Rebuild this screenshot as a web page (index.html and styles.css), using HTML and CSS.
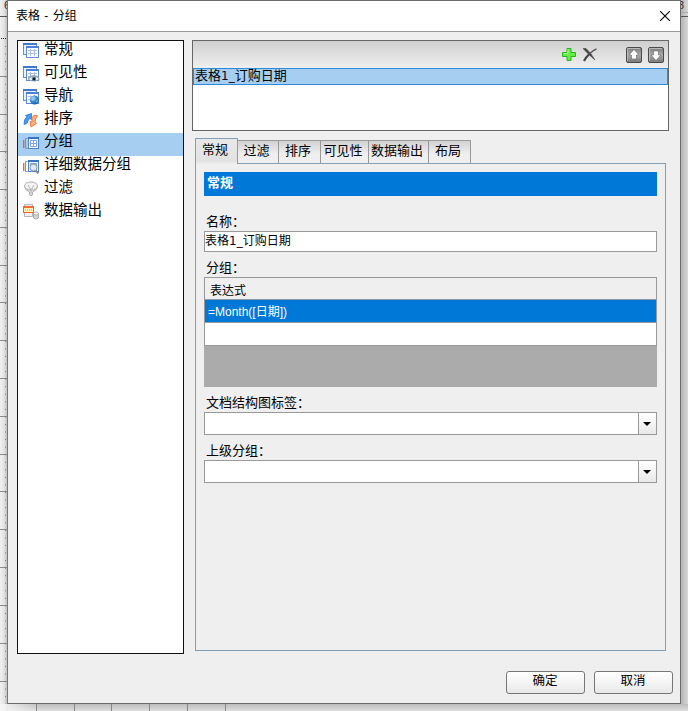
FILE: index.html
```
<!DOCTYPE html>
<html lang="zh-CN">
<head>
<meta charset="utf-8">
<title>表格 - 分组</title>
<link rel="stylesheet" href="styles.css">
</head>
<body>
<svg class="canvas" width="688" height="711" viewBox="0 0 688 711" aria-hidden="true">
  <defs>
    <linearGradient id="sl" x1="0" x2="1" y1="0" y2="0"><stop offset="0" stop-color="#f0f0f0"/><stop offset=".5" stop-color="#e4e4e4"/><stop offset="1" stop-color="#b4b4b4"/></linearGradient>
    <linearGradient id="sr" x1="0" x2="1" y1="0" y2="0"><stop offset="0" stop-color="#b4b4b4"/><stop offset="1" stop-color="#d8d8d8"/></linearGradient>
    <linearGradient id="sb" x1="0" x2="0" y1="0" y2="1"><stop offset="0" stop-color="#bcbcbc"/><stop offset="1" stop-color="#dedede"/></linearGradient>
    <linearGradient id="corner" x1="0" x2="1" y1="0" y2="0"><stop offset="0" stop-color="#f6f6f6"/><stop offset="1" stop-color="#f6f6f6" stop-opacity="0"/></linearGradient>
  </defs>
  <rect width="8" height="711" fill="url(#sl)"/>
  <rect x="681" width="7" height="711" fill="url(#sr)"/>
  <rect y="704" x="8" width="680" height="7" fill="url(#sb)"/>
  <rect y="704" x="0" width="40" height="7" fill="url(#corner)"/>
  <path d="M0 16.500H8M681 16.500H688" stroke="#555"/>
  <path d="M681 12.500H688" stroke="#aaa"/>
  <path d="M1 38.500H8" stroke="#222" stroke-dasharray="1 1"/>
  <path d="M0 76.500H8M0 114.500H8M0 151.500H8M0 189.500H8M0 227.500H8M0 265.500H8M0 302.500H8M0 340.500H8M0 378.500H8M0 416.500H8M0 454.500H8M0 491.500H8M0 529.500H8M0 567.500H8M0 605.500H8M0 643.500H8M0 681.500H8" stroke="#8a8a8a"/>
  <path d="M5.500 46V704" stroke="#777" stroke-dasharray="1 6.560"/>
  <path d="M36.500 704V711M74.500 704V711M111.500 704V711M149.500 704V711M187.500 704V711M225.500 704V711" stroke="#858585"/>
  <text x="4" y="9" class="ruler">6</text>
  <text x="678" y="9" class="ruler">3</text>
</svg>

<svg class="defs" aria-hidden="true">
  <defs>
    <linearGradient id="metal" x1="0" x2="0" y1="0" y2="1"><stop offset="0" stop-color="#7c7c7c"/><stop offset=".5" stop-color="#aaa"/><stop offset="1" stop-color="#777"/></linearGradient>
    <radialGradient id="globe" cx=".35" cy=".3" r=".8"><stop offset="0" stop-color="#a9dcff"/><stop offset=".5" stop-color="#3887ce"/><stop offset="1" stop-color="#155093"/></radialGradient>
    <symbol id="tables" viewBox="0 0 17 16">
      <rect x=".5" y=".5" width="13" height="11" fill="#e9f1ff" stroke="#608fdc"/>
      <path d="M0 1H14" stroke="#4277d0" stroke-width="2"/>
      <rect x="3.500" y="3.500" width="12" height="11" fill="#fff" stroke="#5c8ce0"/>
      <path d="M3 4H16" stroke="#4b7fdb" stroke-width="2"/>
      <path d="M5 7.500H14M5 10.500H14M7.500 6V13M11.500 6V13" stroke="#a9bde4" fill="none"/>
    </symbol>
    <symbol id="group" viewBox="0 0 17 16">
      <path d="M.7 5V13" stroke="#d86c1d" stroke-width="1.300"/>
      <path d="M4.500 3.500H2.500V13.500H4.500" fill="none" stroke="#6c94cb"/>
      <rect x="5.500" y="2.500" width="10" height="11" fill="#f5f9ff" stroke="#4e82d5"/>
      <path d="M5 3H16" stroke="#3b71c9" stroke-width="2"/>
      <path d="M7.500 5.500H13.500V11.500H7.500ZM7.500 8.500H13.500M10.500 5.500V11.500" fill="#fff" stroke="#82a5de"/>
    </symbol>
  </defs>
</svg>

<main class="dialog">
  <header class="titlebar">
    <h1 class="title">表格 - 分组</h1>
    <svg class="close" width="10" height="10" viewBox="0 0 10 10"><path d="M0 0L10 10M10 0L0 10" stroke="#000" stroke-width="1.100"/></svg>
  </header>

  <div class="content">
    <nav class="sidebar">
      <a class="item"><svg class="icon"><use href="#tables"/></svg>常规</a>
      <a class="item"><svg class="icon" viewBox="0 0 17 16"><use href="#tables" width="17" height="16"/><path d="M5 13Q11 8 16.500 13Q11 17 5 13Z" fill="#fff" stroke="#999" stroke-width=".8"/><path d="M5 12Q10.500 7.500 16 11.500" fill="none" stroke="#8f9699"/><circle cx="11" cy="13" r="2.300" fill="#4b87a8"/><circle cx="11" cy="13" r="1.200" fill="#111"/></svg>可见性</a>
      <a class="item"><svg class="icon" viewBox="0 0 17 16"><use href="#tables" width="17" height="16"/><circle cx="11.500" cy="11" r="4.500" fill="url(#globe)"/><path d="M8 9L11 8L12 10L9 12ZM13 12L15 11L14 14Z" fill="#91c8ec"/></svg>导航</a>
      <a class="item"><svg class="icon" viewBox="0 0 17 16"><path d="M1 12.500Q.8 7 4 4.500L2.500 3.500 8.500 1.500 8.500 7.500 7 6.500Q4.500 8 4.500 11Z" fill="#4c9cf3" stroke="#2375d7" stroke-width=".8"/><path d="M14.500 3.500Q10 2.500 9 5.500L9 10 7 9.500 8 15 13.500 11.500 12 10.500Q12 6.500 14.500 3.500Z" fill="#ffb27d" stroke="#ed7436" stroke-width=".9"/></svg>排序</a>
      <a class="item selected"><svg class="icon"><use href="#group"/></svg>分组</a>
      <a class="item"><svg class="icon" viewBox="0 0 17 16"><use href="#group" width="17" height="16"/><path d="M12 12L15.500 15.500" stroke="#888" stroke-width="2"/><circle cx="10.500" cy="9.500" r="3.500" fill="#dceaf5" stroke="#8b949b"/></svg>详细数据分组</a>
      <a class="item"><svg class="icon" viewBox="0 0 17 16"><path d="M1.500 5Q1.500 9 6.500 11V14Q8 15.500 9.500 14V11Q14.500 9 14.500 5Z" fill="#e4e4e4" stroke="#b0b0b0"/><ellipse cx="8" cy="5" rx="6.500" ry="4" fill="#f4f4f4" stroke="#b0b0b0"/><path d="M8 9L5 4M8 9L11 4M8 9V13" stroke="#aaa" stroke-width=".8"/></svg>过滤</a>
      <a class="item"><svg class="icon" viewBox="0 0 17 16"><path d="M1.500 .5H9.500V12.500H1.500Z" fill="#eee" stroke="#b5b5b5"/><rect x=".5" y="2.500" width="10" height="6" fill="#fff0ba" stroke="#e8682b"/><path d="M0 3H11" stroke="#ed6c32" stroke-width="2"/><path d="M2 6H9" stroke="#ed8e4b" stroke-dasharray="1 1"/><path d="M10.500 9V14Q13 16 15.500 14V9" fill="#d7d7d7" stroke="#aaa"/><ellipse cx="13" cy="9.500" rx="2.500" ry="1.500" fill="#fafafa" stroke="#aaa"/></svg>数据输出</a>
    </nav>

    <div class="main">
      <section class="groups">
        <div class="toolbar">
          <svg class="tool" width="14" height="14" viewBox="0 0 14 14"><path d="M5 .5H9V4.500H13.500V8.500H9V12.500H5V8.500H.5V4.500H5Z" fill="#65ee42" stroke="#25b71b"/><path d="M6 1.500V5.500H1.500" fill="none" stroke="#b8ff99"/></svg>
          <svg class="tool cross" width="14" height="14" viewBox="0 0 14 14"><path d="M0 .5L3 .5Q8 5 12 12Q6 7 0 .5Z" fill="#444" stroke="#444" stroke-width=".6"/><path d="M13.500 .8Q7 4 2.500 10.500" fill="none" stroke="#555" stroke-width="1.300"/><path d="M6 6.500Q3 9 1 13" fill="none" stroke="#444" stroke-width="2.200"/></svg>
          <svg class="tool" width="16" height="16" viewBox="0 0 16 16"><rect x=".5" y=".5" width="15" height="15" rx="1.500" fill="url(#metal)" stroke="#4b4b4b"/><path d="M1.500 14V1.500H14" fill="none" stroke="#b8b8b8"/><path d="M8 2.500L13 8H10.500V12H5.500V8H3Z" fill="#fff" stroke="#666" stroke-width=".6"/></svg>
          <svg class="tool" width="16" height="16" viewBox="0 0 16 16"><rect x=".5" y=".5" width="15" height="15" rx="1.500" fill="url(#metal)" stroke="#4b4b4b"/><path d="M1.500 14V1.500H14" fill="none" stroke="#b8b8b8"/><path d="M8 13.500L13 8H10.500V4H5.500V8H3Z" fill="#fff" stroke="#666" stroke-width=".6"/></svg>
        </div>
        <div class="group-row">表格<span class="latin">1_</span>订购日期</div>
      </section>

      <div class="tabs">
        <span class="tab active">常规</span><span class="tab w41">过滤</span><span class="tab w42">排序</span><span class="tab w48">可见性</span><span class="tab w60">数据输出</span><span class="tab w42">布局</span>
      </div>
      <section class="panel">
        <h2 class="heading">常规</h2>
        <div class="label name-label">名称：</div>
        <div class="input">表格<span class="latin">1_</span>订购日期</div>
        <div class="label">分组：</div>
        <div class="table">
          <div class="th">表达式</div>
          <div class="tr chosen">=Month([日期])</div>
          <div class="tr"></div>
        </div>
        <div class="label">文档结构图标签：</div>
        <div class="combo"><span class="drop"><svg width="8" height="4" viewBox="0 0 8 4"><path d="M0 0H8L4 4Z"/></svg></span></div>
        <div class="label">上级分组：</div>
        <div class="combo"><span class="drop"><svg width="8" height="4" viewBox="0 0 8 4"><path d="M0 0H8L4 4Z"/></svg></span></div>
      </section>
    </div>
  </div>

  <footer class="footer">
    <button class="button">确定</button>
    <button class="button">取消</button>
  </footer>
</main>
</body>
</html>
```
FILE: styles.css
```
* { box-sizing: border-box; }
body {
  margin: 0;
  width: 688px;
  height: 711px;
  overflow: hidden;
  background: #d4d4d4;
  color: #000;
  font: 12px/16px "Liberation Sans", "Noto Sans CJK SC", sans-serif;
}
svg { display: block; flex: none; }
.canvas { position: absolute; top: 0; left: 0; }
.defs { position: absolute; width: 0; height: 0; }
.ruler { font-size: 11px; fill: #333; }

.dialog {
  position: relative;
  margin-left: 7px;
  width: 674px;
  height: 704px;
  border: 1px solid #6b6b6b;
  border-left-color: #777;
  background: #efefef;
}
.titlebar {
  display: flex;
  align-items: center;
  justify-content: space-between;
  height: 31px;
  padding: 0 10px 1px 8px;
  background: #fff;
  border-bottom: 1px solid #999;
}
.title { margin: 0; font-size: 12px; font-weight: 400; word-spacing: 1px; }

.content { display: flex; gap: 8px; padding: 8px 0 0 9px; }
.sidebar {
  width: 167px;
  height: 614px;
  border: 1px solid #111;
  background: #fff;
}
.item {
  display: flex;
  align-items: center;
  gap: 4px;
  height: 23px;
  padding: 0 0 7px 5px;
  font-size: 14.500px;
  white-space: nowrap;
}
.icon { width: 17px; height: 16px; position: relative; top: 2px; }
.selected { background: #a5cef0; }

.main { width: 477px; }
.groups { height: 91px; border: 1px solid #666; background: #fff; }
.toolbar {
  display: flex;
  align-items: center;
  height: 27px;
  padding-right: 4px;
  justify-content: flex-end;
  background: linear-gradient(#cfcfcf, #efefef);
}
.toolbar .tool + .tool { margin-left: 6px; }
.toolbar .cross + .tool { margin-left: 29px; }
.toolbar .tool.cross { margin-left: 7px; }
.group-row {
  height: 17px;
  padding-left: 1px;
  border: 1px solid #2a8bd8;
  background: #a5cef0;
  font-size: 13px;
  line-height: 14px;
}
.latin { font-family: "DejaVu Sans", sans-serif; font-size: 12px; color: #102; }

.tabs { display: flex; align-items: flex-end; height: 26px; margin: 7px 0 -1px 3px; position: relative; }
.tab {
  height: 24px;
  padding-right: 3px;
  border: 1px solid #999;
  border-left: 0;
  border-bottom-color: #829fb8;
  background: linear-gradient(#d2d2d2, #efefef 60%);
  font-size: 13px;
  line-height: 19px;
  text-align: center;
  white-space: nowrap;
}
.tab.active {
  width: 43px;
  height: 26px;
  border: 1px solid #829fb8;
  border-bottom: 0;
  background: linear-gradient(#e8e8e8, #e2e2e2 90%, #efefef);
  line-height: 21px;
}
.w41 { width: 41px; }
.w42 { width: 42px; }
.w48 { width: 48px; }
.w60 { width: 60px; }

.panel { width: 471px; height: 488px; margin-left: 3px; padding: 8px; border: 1px solid #829fb8; }
.heading {
  height: 24px;
  margin: 0;
  padding-left: 3px;
  background: #0078d7;
  color: #fff;
  font-size: 13px;
  font-weight: 700;
  line-height: 21px;
}
.label { height: 16px; margin: 8px 0 1px; padding-left: 2px; font-size: 13px; line-height: 16px; }
.name-label { margin-top: 18px; }
.input { height: 21px; padding-left: 0; border: 1px solid #999; background: #fff; line-height: 19px; }
.table { height: 110px; background: #ababab; }
.th { height: 23px; padding: 5px 0 0 5px; border: 1px solid #999; border-bottom-color: #8a9aa8; background: #efefef; }
.tr { height: 23px; padding-left: 3px; border: 1px solid #999; border-top: 0; background: #fff; line-height: 24px; }
.chosen { background: #0078d7; color: #fff; }
.combo { display: flex; justify-content: flex-end; height: 23px; border: 1px solid #999; background: #fff; }
.drop { display: flex; align-items: center; justify-content: center; width: 18px; padding-right: 1px; border-left: 1px solid #999; background: linear-gradient(#fff, #e8e8e8); }

.footer { display: flex; justify-content: flex-end; gap: 9px; padding: 17px 7px 0 0; }
.button {
  width: 79px;
  height: 23px;
  padding: 0 1px 4px 0;
  border: 1px solid #777;
  border-radius: 3px;
  background: linear-gradient(#fff, #f2f2f2 60%, #e8e8e8);
  color: #000;
  font: 12.500px/16px "Liberation Sans", "Noto Sans CJK SC", sans-serif;
}
```
